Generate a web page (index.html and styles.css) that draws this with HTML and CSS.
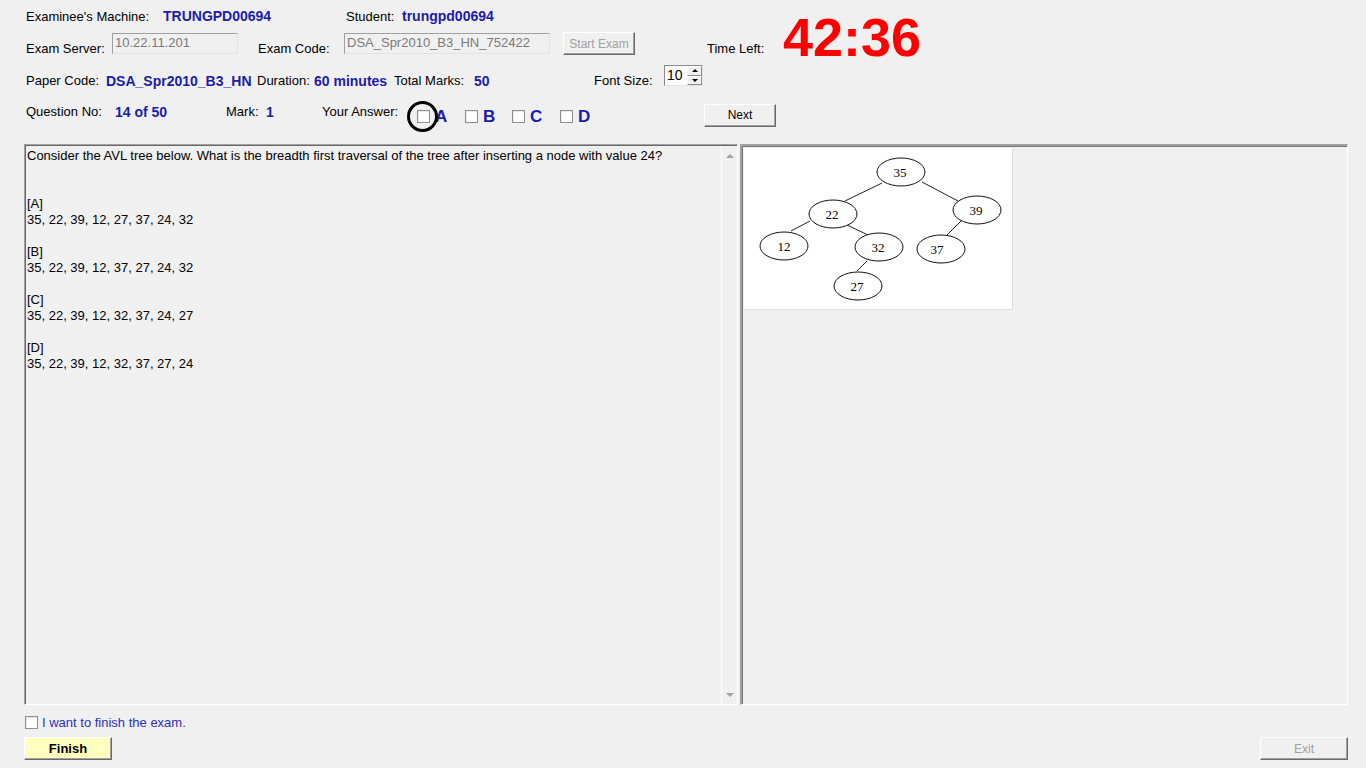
FILE: index.html
```html
<!DOCTYPE html>
<html>
<head>
<meta charset="utf-8">
<link rel="stylesheet" href="styles.css">
</head>
<body>
<div class="app">
  <div class="row row1">
    <span class="lbl w137">Examinee's Machine:</span>
    <span class="val w183">TRUNGPD00694</span>
    <span class="lbl w56">Student:</span>
    <span class="val">trungpd00694</span>
  </div>
  <div class="row row2">
    <span class="lbl w86 low">Exam Server:</span>
    <span class="field w126">10.22.11.201</span>
    <span class="lbl w86 low ml20">Exam Code:</span>
    <span class="field w206">DSA_Spr2010_B3_HN_752422</span>
    <span class="btn disabled start">Start Exam</span>
    <span class="lbl w79 low ml72">Time Left:</span>
    <span class="timer">42:36</span>
  </div>
  <div class="row row3">
    <span class="lbl w80 low">Paper Code:</span>
    <span class="val w151 low">DSA_Spr2010_B3_HN</span>
    <span class="lbl w57 low">Duration:</span>
    <span class="val w80 low">60 minutes</span>
    <span class="lbl w80 low">Total Marks:</span>
    <span class="val w120 low">50</span>
    <span class="lbl w70 low">Font Size:</span>
    <span class="spin"><span class="spin-val">10</span><span class="spin-btns"><span class="sb up"></span><span class="sb down"></span></span></span>
  </div>
  <div class="row row4">
    <span class="lbl w89 high">Question No:</span>
    <span class="val w111 high">14 of 50</span>
    <span class="lbl w40 high">Mark:</span>
    <span class="val w56 high">1</span>
    <span class="lbl w95 high">Your Answer:</span>
    <span class="choice"><span class="cb"></span><span class="letter">A</span><span class="ring"></span></span>
    <span class="choice"><span class="cb"></span><span class="letter">B</span></span>
    <span class="choice"><span class="cb"></span><span class="letter">C</span></span>
    <span class="choice w144"><span class="cb"></span><span class="letter">D</span></span>
    <span class="btn next">Next</span>
  </div>

  <div class="panels">
    <div class="qpanel">
      <div class="qtext">
        <p>Consider the AVL tree below. What is the breadth first traversal of the tree after inserting a node with value 24?</p>
        <p>&nbsp;</p>
        <p>&nbsp;</p>
        <p>[A]</p>
        <p>35, 22, 39, 12, 27, 37, 24, 32</p>
        <p>&nbsp;</p>
        <p>[B]</p>
        <p>35, 22, 39, 12, 37, 27, 24, 32</p>
        <p>&nbsp;</p>
        <p>[C]</p>
        <p>35, 22, 39, 12, 32, 37, 24, 27</p>
        <p>&nbsp;</p>
        <p>[D]</p>
        <p>35, 22, 39, 12, 32, 37, 27, 24</p>
      </div>
      <div class="vscroll">
        <span class="arr-up"></span>
        <span class="arr-down"></span>
      </div>
    </div>
    <div class="ipanel">
      <div class="figure">
        <svg width="268" height="161" viewBox="0 0 268 161" xmlns="http://www.w3.org/2000/svg">
          <rect x="0" y="0" width="268" height="161" fill="#fff"/>
          <g stroke="#222" stroke-width="1" fill="none">
            <line x1="138" y1="35" x2="101" y2="53"/>
            <line x1="178" y1="34" x2="214" y2="53"/>
            <line x1="66" y1="73" x2="47" y2="83"/>
            <line x1="103" y1="77" x2="124" y2="87"/>
            <line x1="217" y1="73" x2="202" y2="88"/>
            <line x1="123" y1="113" x2="113" y2="123"/>
          </g>
          <g stroke="#111" stroke-width="1" fill="#fff">
            <ellipse cx="157" cy="24" rx="24" ry="14"/>
            <ellipse cx="89" cy="66" rx="24" ry="14"/>
            <ellipse cx="233" cy="62" rx="24" ry="14"/>
            <ellipse cx="40" cy="98" rx="24" ry="14"/>
            <ellipse cx="135" cy="99" rx="24" ry="14"/>
            <ellipse cx="197" cy="101" rx="24" ry="14"/>
            <ellipse cx="114" cy="138" rx="24" ry="14"/>
          </g>
          <g class="nodetext" text-anchor="middle">
            <text x="156" y="29">35</text>
            <text x="88" y="71">22</text>
            <text x="232" y="67">39</text>
            <text x="40" y="103">12</text>
            <text x="134" y="104">32</text>
            <text x="193" y="106">37</text>
            <text x="113" y="143">27</text>
          </g>
        </svg>
      </div>
    </div>
  </div>

  <div class="finish-row">
    <span class="cb"></span>
    <span class="finish-lbl">I want to finish the exam.</span>
  </div>
  <div class="bottom-row">
    <span class="btn finish">Finish</span>
    <span class="btn disabled exit">Exit</span>
  </div>
</div>
</body>
</html>
```

FILE: styles.css
```css
html, body {
  margin: 0;
  padding: 0;
  background: #f0f0f0;
}
body {
  font-family: "Liberation Sans", Arial, sans-serif;
  font-size: 13px;
  color: #000;
  width: 1366px;
  height: 768px;
  overflow: hidden;
}
.app {
  display: flex;
  flex-direction: column;
}
.row {
  display: flex;
  align-items: center;
  padding-left: 26px;
  flex: none;
}
.row1 { margin-top: 6px; height: 20px; }
.row2 { margin-top: 6px; height: 23px; }
.row3 { margin-top: 9px; height: 22px; }
.row4 { margin-top: 18px; height: 22px; }

.lbl, .val { flex: none; white-space: nowrap; }
.val {
  font-weight: bold;
  font-size: 14px;
  color: #1c1cab;
}
.low { align-self: flex-end; line-height: 16px; margin-bottom: -2px; }
.row3 .low { margin-bottom: -3px; }
.high { align-self: flex-start; line-height: 16px; }

.w137 { width: 137px; }
.w183 { width: 183px; }
.w56 { width: 56px; }
.w86 { width: 86px; }
.w126 { width: 126px; }
.w206 { width: 206px; }
.w79 { width: 79px; }
.w80 { width: 80px; }
.w151 { width: 151px; }
.w57 { width: 57px; }
.w120 { width: 120px; }
.w70 { width: 70px; }
.w89 { width: 89px; }
.w111 { width: 111px; }
.w40 { width: 40px; }
.w95 { width: 95px; }
.w144 { width: 144px !important; }
.ml20 { margin-left: 20px; }
.ml72 { margin-left: 72px; }

.field {
  flex: none;
  box-sizing: border-box;
  height: 21px;
  align-self: flex-end;
  margin-bottom: 1px;
  border: 1px solid #e3e3e3;
  border-top-color: #a0a0a0;
  border-left-color: #a0a0a0;
  background: #f0f0f0;
  color: #7a7a7a;
  font-size: 13px;
  line-height: 17px;
  padding-left: 2px;
  white-space: nowrap;
  overflow: hidden;
}

.btn {
  flex: none;
  box-sizing: border-box;
  display: flex;
  align-items: center;
  justify-content: center;
  height: 23px;
  font-size: 12px;
  background: #f0f0f0;
  border: 1px solid #fff;
  border-right-color: #696969;
  border-bottom-color: #696969;
  box-shadow: inset -1px -1px 0 #a0a0a0;
  white-space: nowrap;
}
.btn.disabled { color: #a0a0a0; }
.start {
  width: 72px;
  margin-left: 13px;
  align-self: flex-start;
}
.next {
  width: 72px;
}
.timer {
  flex: none;
  font-size: 54px;
  font-weight: bold;
  color: #ff0000;
  line-height: 50px;
  height: 50px;
  align-self: center;
  margin-top: -14px;
  margin-left: -3px;
  white-space: nowrap;
}

.spin {
  flex: none;
  display: flex;
  box-sizing: border-box;
  width: 39px;
  height: 21px;
  align-self: flex-start;
  margin-top: 1px;
  background: #fff;
  border: 1px solid #e3e3e3;
  border-top-color: #8a8a8a;
  border-left-color: #8a8a8a;
}
.spin-val {
  flex: 1;
  font-size: 14px;
  line-height: 18px;
  padding-left: 2px;
}
.spin-btns {
  flex: none;
  width: 15px;
  display: flex;
  flex-direction: column;
}
.sb {
  flex: 1;
  box-sizing: border-box;
  background: #f0f0f0;
  border: 1px solid #fff;
  border-right-color: #8a8a8a;
  border-bottom-color: #8a8a8a;
  display: flex;
  align-items: center;
  justify-content: center;
}
.sb::after {
  content: "";
  width: 0;
  height: 0;
  border-left: 3px solid transparent;
  border-right: 3px solid transparent;
}
.up::after { border-bottom: 3px solid #000; }
.down::after { border-top: 3px solid #000; }

.choice {
  flex: none;
  width: 48px;
  display: flex;
  align-items: center;
  position: relative;
  margin-top: 3px;
}
.choice:nth-of-type(7) { width: 47px; }
.cb {
  flex: none;
  display: inline-block;
  box-sizing: border-box;
  width: 13px;
  height: 13px;
  background: #fff;
  border: 1px solid #8e8f8f;
  box-shadow: inset 1px 1px 0 #e8e8e8;
}
.letter {
  margin-left: 5px;
  font-size: 17px;
  font-weight: bold;
  color: #1c1cab;
  line-height: 18px;
}
.ring {
  position: absolute;
  left: -10px;
  top: -7px;
  width: 25px;
  height: 25px;
  border: 3px solid #000;
  border-radius: 50%;
}

.panels {
  display: flex;
  margin-top: 18px;
  margin-left: 24px;
  gap: 2px;
  height: 561px;
  flex: none;
}
.qpanel {
  box-sizing: border-box;
  width: 714px;
  height: 561px;
  display: flex;
  border-top: 1px solid #a0a0a0;
  border-left: 1px solid #a0a0a0;
  border-bottom: 1px solid #fff;
  border-right: 1px solid #fff;
  box-shadow: inset 1px 1px 0 #696969;
}
.qtext {
  flex: 1;
  padding: 3px 0 0 2px;
  font-size: 13px;
  line-height: 16px;
}
.qtext p { margin: 0; white-space: nowrap; }
.vscroll {
  flex: none;
  width: 15px;
  margin-top: 1px;
  background: #f0f0f0;
  border-left: 1px solid #fdfdfd;
  display: flex;
  flex-direction: column;
  justify-content: space-between;
  align-items: center;
  padding: 8px 0 7px;
}
.arr-up, .arr-down {
  width: 0;
  height: 0;
  border-left: 4px solid transparent;
  border-right: 4px solid transparent;
}
.arr-up { border-bottom: 4px solid #a3a3a3; }
.arr-down { border-top: 4px solid #a3a3a3; }

.ipanel {
  box-sizing: border-box;
  width: 608px;
  height: 561px;
  border-top: 2px solid #a0a0a0;
  border-left: 2px solid #a0a0a0;
  border-right: 1px solid #fff;
  border-bottom: 1px solid #fff;
  box-shadow: inset 1px 1px 0 #777;
  padding: 2px 0 0 2px;
}
.figure {
  width: 269px;
  height: 162px;
  box-sizing: border-box;
  border-right: 1px solid #dedede;
  border-bottom: 1px solid #dedede;
}
.figure svg { display: block; }
.nodetext {
  font-family: "Liberation Serif", "Times New Roman", serif;
  font-size: 13px;
  fill: #000;
}

.finish-row {
  display: flex;
  align-items: center;
  margin-top: 10px;
  margin-left: 25px;
  height: 14px;
}
.finish-lbl {
  margin-left: 4px;
  color: #2e2ebd;
  font-size: 13px;
}
.bottom-row {
  display: flex;
  justify-content: space-between;
  margin-top: 8px;
  margin-left: 24px;
  width: 1324px;
}
.finish {
  width: 88px;
  background: #ffffc0;
  font-weight: bold;
  font-size: 13px;
}
.exit {
  width: 88px;
}
```
